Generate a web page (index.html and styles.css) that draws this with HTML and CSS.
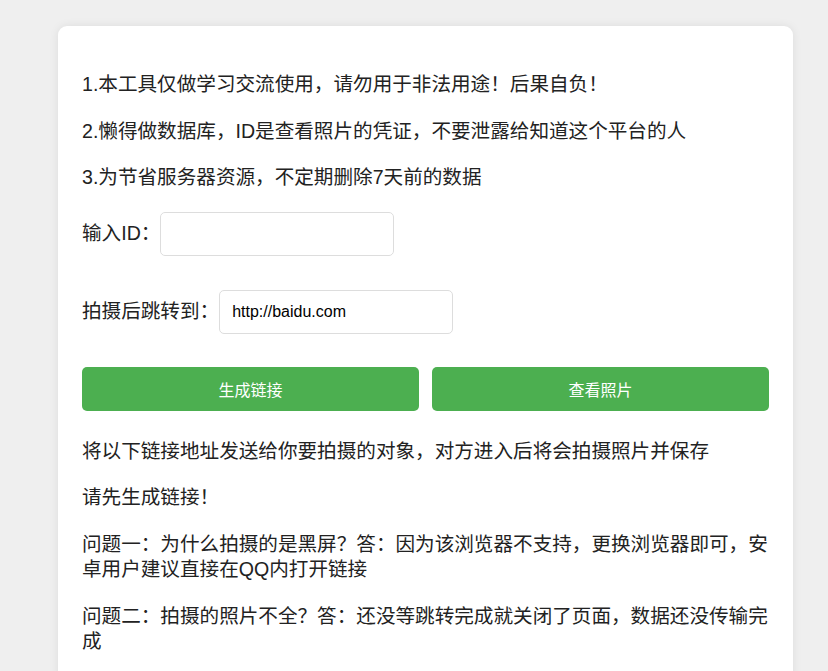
FILE: index.html
```html
<!DOCTYPE html>
<html lang="zh-CN">
<head>
<meta charset="utf-8">
<title>拍照工具</title>
<link rel="stylesheet" href="styles.css">
</head>
<body>
<div class="card">
  <p class="note">1.本工具仅做学习交流使用，请勿用于非法用途！后果自负！</p>
  <p class="note">2.懒得做数据库，ID是查看照片的凭证，不要泄露给知道这个平台的人</p>
  <p class="note">3.为节省服务器资源，不定期删除7天前的数据</p>
  <div class="field field-first">
    <label class="label" for="uid">输入ID：</label>
    <input class="input" id="uid" type="text">
  </div>
  <div class="field">
    <label class="label" for="jump">拍摄后跳转到：</label>
    <input class="input" id="jump" type="text" value="http://baidu.com">
  </div>
  <div class="actions">
    <button class="btn" type="button">生成链接</button>
    <button class="btn" type="button">查看照片</button>
  </div>
  <p class="note">将以下链接地址发送给你要拍摄的对象，对方进入后将会拍摄照片并保存</p>
  <p class="note">请先生成链接！</p>
  <p class="note">问题一：为什么拍摄的是黑屏？答：因为该浏览器不支持，更换浏览器即可，安卓用户建议直接在QQ内打开链接</p>
  <p class="note">问题二：拍摄的照片不全？答：还没等跳转完成就关闭了页面，数据还没传输完成</p>
</div>
</body>
</html>
```

FILE: styles.css
```css
html, body {
  margin: 0;
  padding: 0;
}
body {
  background: #efefef;
  font-family: "Liberation Sans", "Noto Sans CJK SC", sans-serif;
  color: #222;
  padding-top: 26px;
  height: 671px;
  overflow: hidden;
  box-sizing: border-box;
}
.card {
  box-sizing: border-box;
  width: 735px;
  margin-left: 58px;
  background: #fff;
  border-radius: 9px;
  box-shadow: 0 0 10px rgba(0, 0, 0, 0.08);
  padding: 25px 24px 20px;
  height: 660px;
  overflow: hidden;
}
.note {
  margin: 21px 0;
  font-size: 19.6px;
  line-height: 25.5px;
}
.field {
  display: flex;
  align-items: center;
  height: 44px;
  margin: 34px 0 0;
}
.field-first {
  margin-top: 21px;
}
.label {
  font-size: 19.6px;
  line-height: 25px;
}
.input {
  box-sizing: border-box;
  width: 234px;
  height: 44px;
  border: 1px solid #ddd;
  border-radius: 5px;
  padding: 0 12px;
  font-family: "Liberation Sans", sans-serif;
  font-size: 16px;
  color: #000;
  background: #fff;
  outline: none;
}
.actions {
  display: flex;
  gap: 13px;
  margin-top: 33px;
  margin-bottom: 28px;
}
.btn {
  flex: 1;
  height: 44px;
  border: 0;
  border-radius: 5px;
  background: #4caf50;
  color: #fff;
  font-family: "Liberation Sans", "Noto Sans CJK SC", sans-serif;
  font-size: 16px;
}
```
